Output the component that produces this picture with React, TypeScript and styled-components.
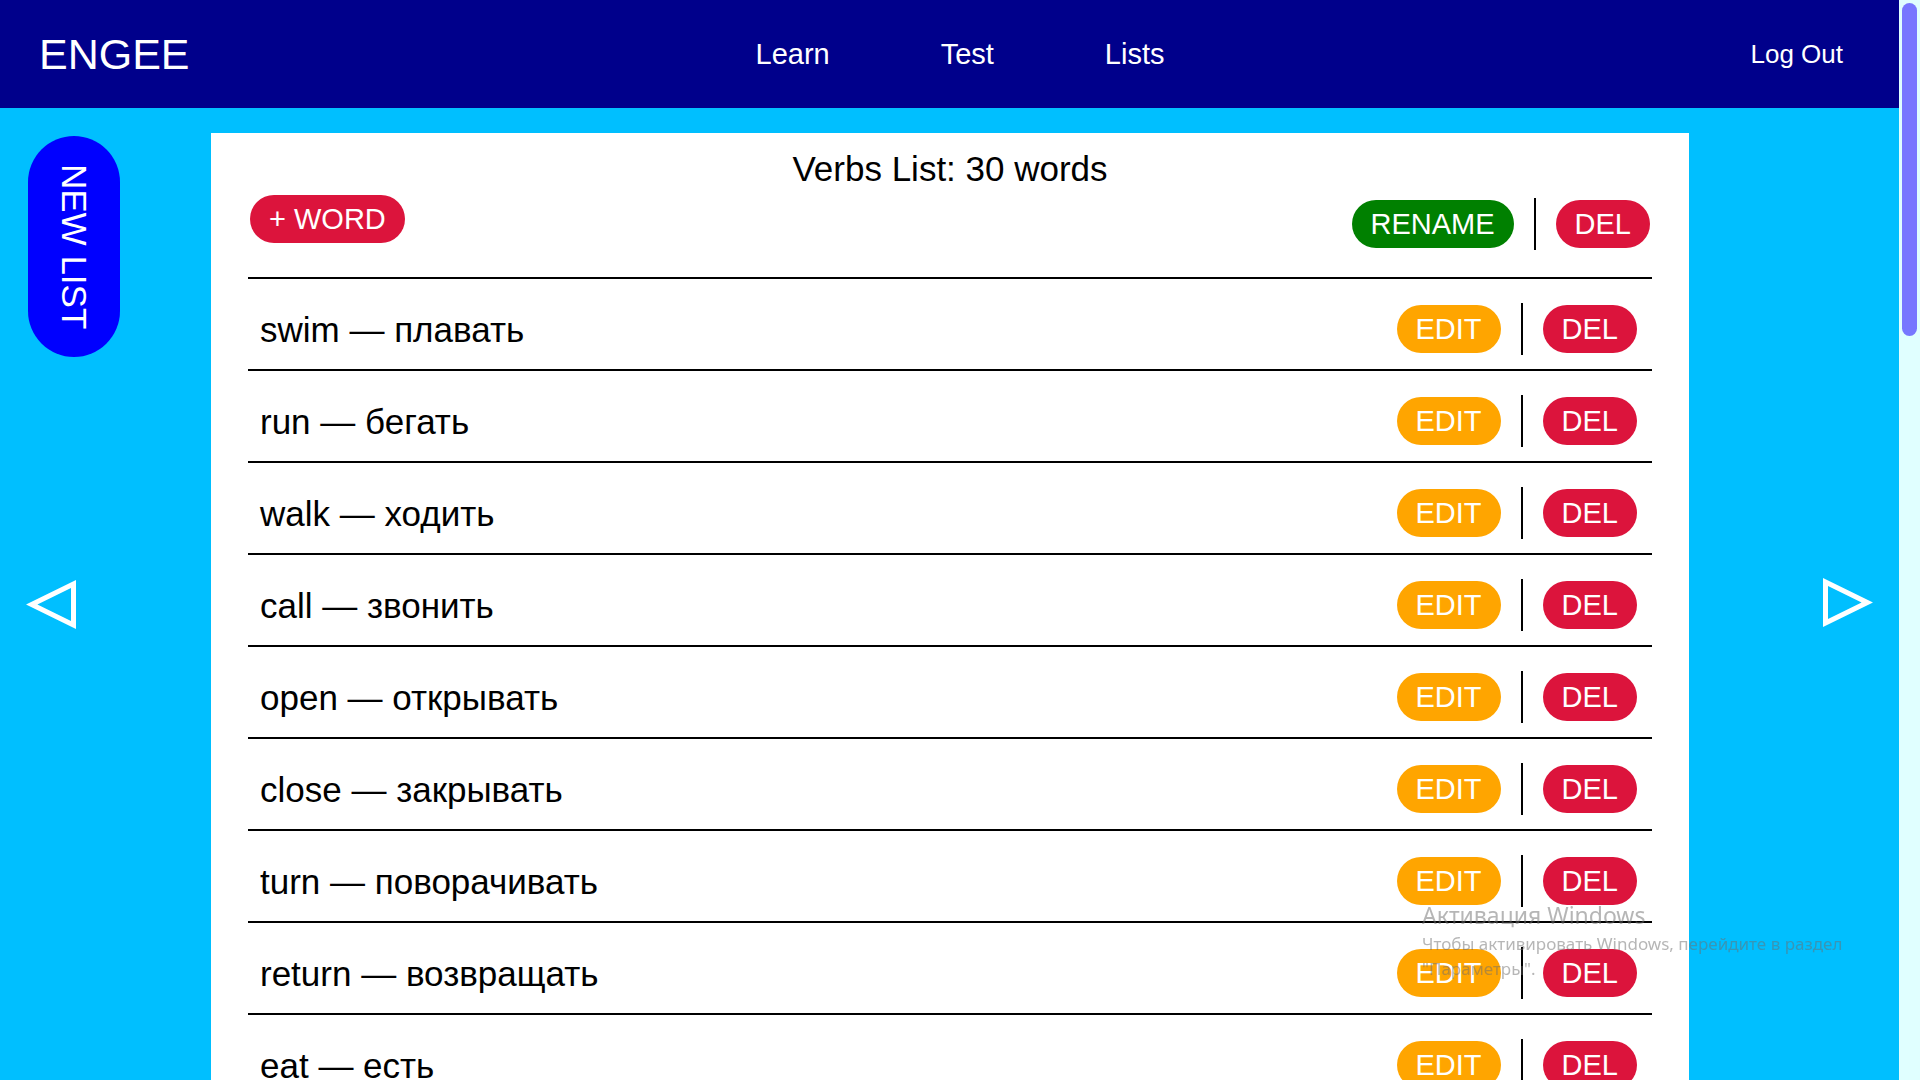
import styled, { createGlobalStyle } from 'styled-components';

const GlobalStyle = createGlobalStyle`
  html, body {
    margin: 0;
    padding: 0;
  }
  body {
    font-family: 'Liberation Sans', Arial, sans-serif;
    background: #00bfff;
    margin-right: 21px;
  }
  ::-webkit-scrollbar {
    display: none;
  }
`;

const words: [string, string][] = [
  ['swim', 'плавать'],
  ['run', 'бегать'],
  ['walk', 'ходить'],
  ['call', 'звонить'],
  ['open', 'открывать'],
  ['close', 'закрывать'],
  ['turn', 'поворачивать'],
  ['return', 'возвращать'],
  ['eat', 'есть'],
  ['drink', 'пить'],
  ['sleep', 'спать'],
  ['read', 'читать'],
  ['write', 'писать'],
  ['speak', 'говорить'],
  ['listen', 'слушать'],
  ['see', 'видеть'],
  ['hear', 'слышать'],
  ['think', 'думать'],
  ['know', 'знать'],
  ['take', 'брать'],
  ['give', 'давать'],
  ['buy', 'покупать'],
  ['sell', 'продавать'],
  ['help', 'помогать'],
  ['learn', 'учить'],
  ['play', 'играть'],
  ['sing', 'петь'],
  ['dance', 'танцевать'],
  ['cook', 'готовить'],
  ['wait', 'ждать'],
];

function Arrow({ dir }: { dir: 'left' | 'right' }) {
  // outlined triangle, like the ◁ ▷ glyphs
  const d =
    dir === 'left'
      ? 'M50 0 L50 49 L0 24.5 Z M45 8 L45 41 L11.4 24.5 Z'
      : 'M0 0 L0 49 L50 24.5 Z M5 8 L5 41 L38.6 24.5 Z';
  return (
    <svg width='50' height='49' viewBox='0 0 50 49'>
      <path d={d} fill='#fff' fillRule='evenodd' />
    </svg>
  );
}

function App() {
  return (
    <>
      <GlobalStyle />
      <Header>
        <Logo>ENGEE</Logo>
        <Nav>
          <NavLink href='#'>Learn</NavLink>
          <NavLink href='#'>Test</NavLink>
          <NavLink href='#'>Lists</NavLink>
        </Nav>
        <HeaderRight>
          <LogOut href='#'>Log Out</LogOut>
        </HeaderRight>
      </Header>

      <Main>
        <SideLeft>
          <NewListButton>NEW LIST</NewListButton>
          <ArrowButton aria-label='previous'>
            <Arrow dir='left' />
          </ArrowButton>
        </SideLeft>

        <Card>
          <Title>Verbs List: 30 words</Title>
          <Toolbar>
            <PillButton $color='#dc143c'>+ WORD</PillButton>
            <Actions $offset={3}>
              <PillButton $color='#008000'>RENAME</PillButton>
              <Divider />
              <PillButton $color='#dc143c'>DEL</PillButton>
            </Actions>
          </Toolbar>
          <WordList>
            {words.map(([en, ru]) => (
              <WordRow key={en}>
                <WordText>
                  {en} — {ru}
                </WordText>
                <Actions>
                  <PillButton $color='#ffa500'>EDIT</PillButton>
                  <Divider />
                  <PillButton $color='#dc143c'>DEL</PillButton>
                </Actions>
              </WordRow>
            ))}
          </WordList>
        </Card>

        <SideRight>
          <ArrowButton aria-label='next'>
            <Arrow dir='right' />
          </ArrowButton>
        </SideRight>
      </Main>

      {/* page scrollbar, as the reference browser draws it */}
      <ScrollRail>
        <ScrollThumb />
      </ScrollRail>

      <Watermark>
        <WatermarkTitle>Активация Windows</WatermarkTitle>
        <WatermarkText>Чтобы активировать Windows, перейдите в раздел</WatermarkText>
        <WatermarkText>"Параметры".</WatermarkText>
      </Watermark>
    </>
  );
}

const Header = styled.header`
  height: 108px;
  background: #00008b;
  color: #fff;
  display: flex;
  align-items: center;
  padding: 0 56px 0 39px;
`;

const Logo = styled.div`
  flex: 1;
  font-size: 43px;
`;

const Nav = styled.nav`
  display: flex;
  gap: 111px;
  padding-left: 38px;
`;

const NavLink = styled.a`
  color: #fff;
  font-size: 29px;
  text-decoration: none;
`;

const HeaderRight = styled.div`
  flex: 1;
  display: flex;
  justify-content: flex-end;
`;

const LogOut = styled.a`
  color: #fff;
  font-size: 26px;
  text-decoration: none;
`;

const Main = styled.main`
  display: grid;
  grid-template-columns: 211px 1478px 1fr;
  align-items: start;
  padding: 25px 0 365px;
`;

const SideLeft = styled.div`
  display: flex;
  flex-direction: column;
  align-items: flex-start;
`;

const SideRight = styled.div`
  display: flex;
  justify-content: flex-end;
  padding: 445px 26px 0 0;
`;

const NewListButton = styled.button`
  writing-mode: vertical-rl;
  margin: 3px 0 0 28px;
  padding: 28px 26px;
  border: 0;
  border-radius: 46px;
  background: #0000ff;
  color: #fff;
  font-family: 'Liberation Sans', Arial, sans-serif;
  font-size: 35px;
  line-height: 40px;
  cursor: pointer;
`;

const ArrowButton = styled.button`
  all: unset;
  display: block;
  width: 50px;
  height: 49px;
  margin: 223px 0 0 26px;
  cursor: pointer;

  ${SideRight} & {
    margin: 0;
  }
`;

const Card = styled.section`
  background: #fff;
  padding: 16px 37px 37px;
`;

const Title = styled.h2`
  margin: 0;
  text-align: center;
  font-weight: normal;
  font-size: 35px;
  line-height: 40px;
  color: #000;
`;

const Toolbar = styled.div`
  display: flex;
  justify-content: space-between;
  align-items: flex-start;
  margin-top: 6px;
  padding: 0 2px;
`;

const Actions = styled.div<{ $offset?: number }>`
  display: flex;
  align-items: center;
  margin-top: ${(p) => p.$offset ?? 0}px;
`;

const Divider = styled.span`
  width: 2px;
  height: 52px;
  background: #000;
  margin: 0 20px;
`;

const PillButton = styled.button<{ $color: string }>`
  height: 48px;
  padding: 0 19px;
  border: 0;
  border-radius: 24px;
  background: ${(p) => p.$color};
  color: #fff;
  font-family: 'Liberation Sans', Arial, sans-serif;
  font-size: 29px;
  line-height: 1;
  cursor: pointer;
`;

const WordList = styled.ul`
  list-style: none;
  margin: 27px 0 0;
  padding: 0;
`;

const WordRow = styled.li`
  display: flex;
  align-items: center;
  border-top: 2px solid #000;
  padding: 24px 15px 14px 12px;
`;

const WordText = styled.span`
  flex: 1;
  font-size: 35px;
  color: #000;
  padding-top: 2px;
`;

const ScrollRail = styled.div`
  position: fixed;
  top: 0;
  right: 0;
  width: 21px;
  height: 100vh;
  background: #e0ffff;
  box-sizing: border-box;
  padding: 3px;
`;

const ScrollThumb = styled.div`
  height: 333px;
  border-radius: 8px;
  background: #7777ff;
`;

const Watermark = styled.div`
  position: fixed;
  left: 1422px;
  top: 899px;
  pointer-events: none;
  color: rgba(110, 110, 110, 0.5);
  font-family: 'Noto Sans', 'Open Sans', sans-serif;
`;

const WatermarkTitle = styled.div`
  font-size: 23px;
  line-height: 32px;
`;

const WatermarkText = styled.div`
  font-size: 17px;
  line-height: 25px;
`;

export default App;
